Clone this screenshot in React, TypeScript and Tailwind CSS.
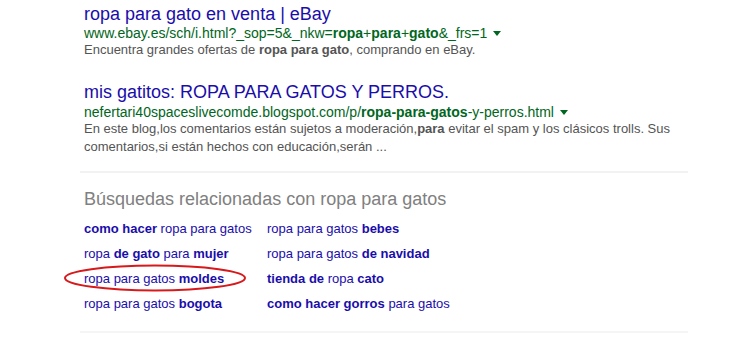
import React from 'react';

type Part = { t: string; b?: boolean };

const related: Part[][] = [
  [{ t: 'como hacer', b: true }, { t: ' ropa para gatos' }],
  [{ t: 'ropa para gatos ' }, { t: 'bebes', b: true }],
  [{ t: 'ropa ' }, { t: 'de gato', b: true }, { t: ' para ' }, { t: 'mujer', b: true }],
  [{ t: 'ropa para gatos ' }, { t: 'de navidad', b: true }],
  [{ t: 'ropa para gatos ' }, { t: 'moldes', b: true }],
  [{ t: 'tienda de', b: true }, { t: ' ropa ' }, { t: 'cato', b: true }],
  [{ t: 'ropa para gatos ' }, { t: 'bogota', b: true }],
  [{ t: 'como hacer gorros', b: true }, { t: ' para gatos' }],
];

const Arrow = () => (
  <span className="ml-[6px] inline-block align-middle border-x-[4px] border-t-[5px] border-x-transparent border-t-[#006621] mb-[2px]" />
);

const App: React.FC = () => {
  return (
    <div className="w-[750px] h-[348px] bg-white overflow-hidden font-['Liberation_Sans',Arial,sans-serif] relative">
      <div className="pl-[84px] pt-[3px] w-[688px]">
        {/* result 1 */}
        <div>
          <h3 className="text-[18px] leading-[22px] text-[#1a0dab]">ropa para gato en venta | eBay</h3>
          <div className="text-[14px] leading-[16px] text-[#006621]">
            www.ebay.es/sch/i.html?_sop=5&amp;_nkw=<b>ropa</b>+<b>para</b>+<b>gato</b>&amp;_frs=1
            <Arrow />
          </div>
          <p className="text-[13px] leading-[18px] text-[#545454]">
            Encuentra grandes ofertas de <b>ropa para gato</b>, comprando en eBay.
          </p>
        </div>

        {/* result 2 */}
        <div className="mt-[22px]">
          <h3 className="text-[18px] leading-[22px] text-[#1a0dab]">mis gatitos: ROPA PARA GATOS Y PERROS.</h3>
          <div className="text-[14px] leading-[16px] text-[#006621] mt-px">
            nefertari40spaceslivecomde.blogspot.com/p/<b>ropa-para-gatos</b>-y-perros.html
            <Arrow />
          </div>
          <p className="text-[13px] leading-[18px] text-[#545454] w-[600px]">
            En este blog,los comentarios están sujetos a moderación,<b>para</b> evitar el spam y los clásicos trolls. Sus
            comentarios,si están hechos con educación,serán ...
          </p>
        </div>
      </div>

      <div className="ml-[80px] w-[608px] h-[2px] bg-[#f2f2f2] mt-[15px]" />

      <div className="pl-[84px]">
        <h2 className="text-[18px] leading-[24px] text-[#808080] mt-[14px]">Búsquedas relacionadas con ropa para gatos</h2>
        <div className="grid grid-cols-[183px_auto] mt-[5px]">
          {related.map((row, i) => (
            <div key={i} className="text-[13px] leading-[25px] text-[#1a0dab]">
              {row.map((p, j) =>
                p.b ? <b key={j}>{p.t}</b> : <span key={j}>{p.t}</span>
              )}
            </div>
          ))}
        </div>
      </div>

      <div className="ml-[80px] w-[608px] h-[2px] bg-[#f5f5f5] mt-[15px]" />

      {/* annotation */}
      <svg className="absolute left-0 top-0 pointer-events-none" width="750" height="348">
        <ellipse cx="155" cy="278" rx="90" ry="12.5" fill="none" stroke="#d7191c" strokeWidth="2" />
      </svg>
    </div>
  );
};

export default App;
